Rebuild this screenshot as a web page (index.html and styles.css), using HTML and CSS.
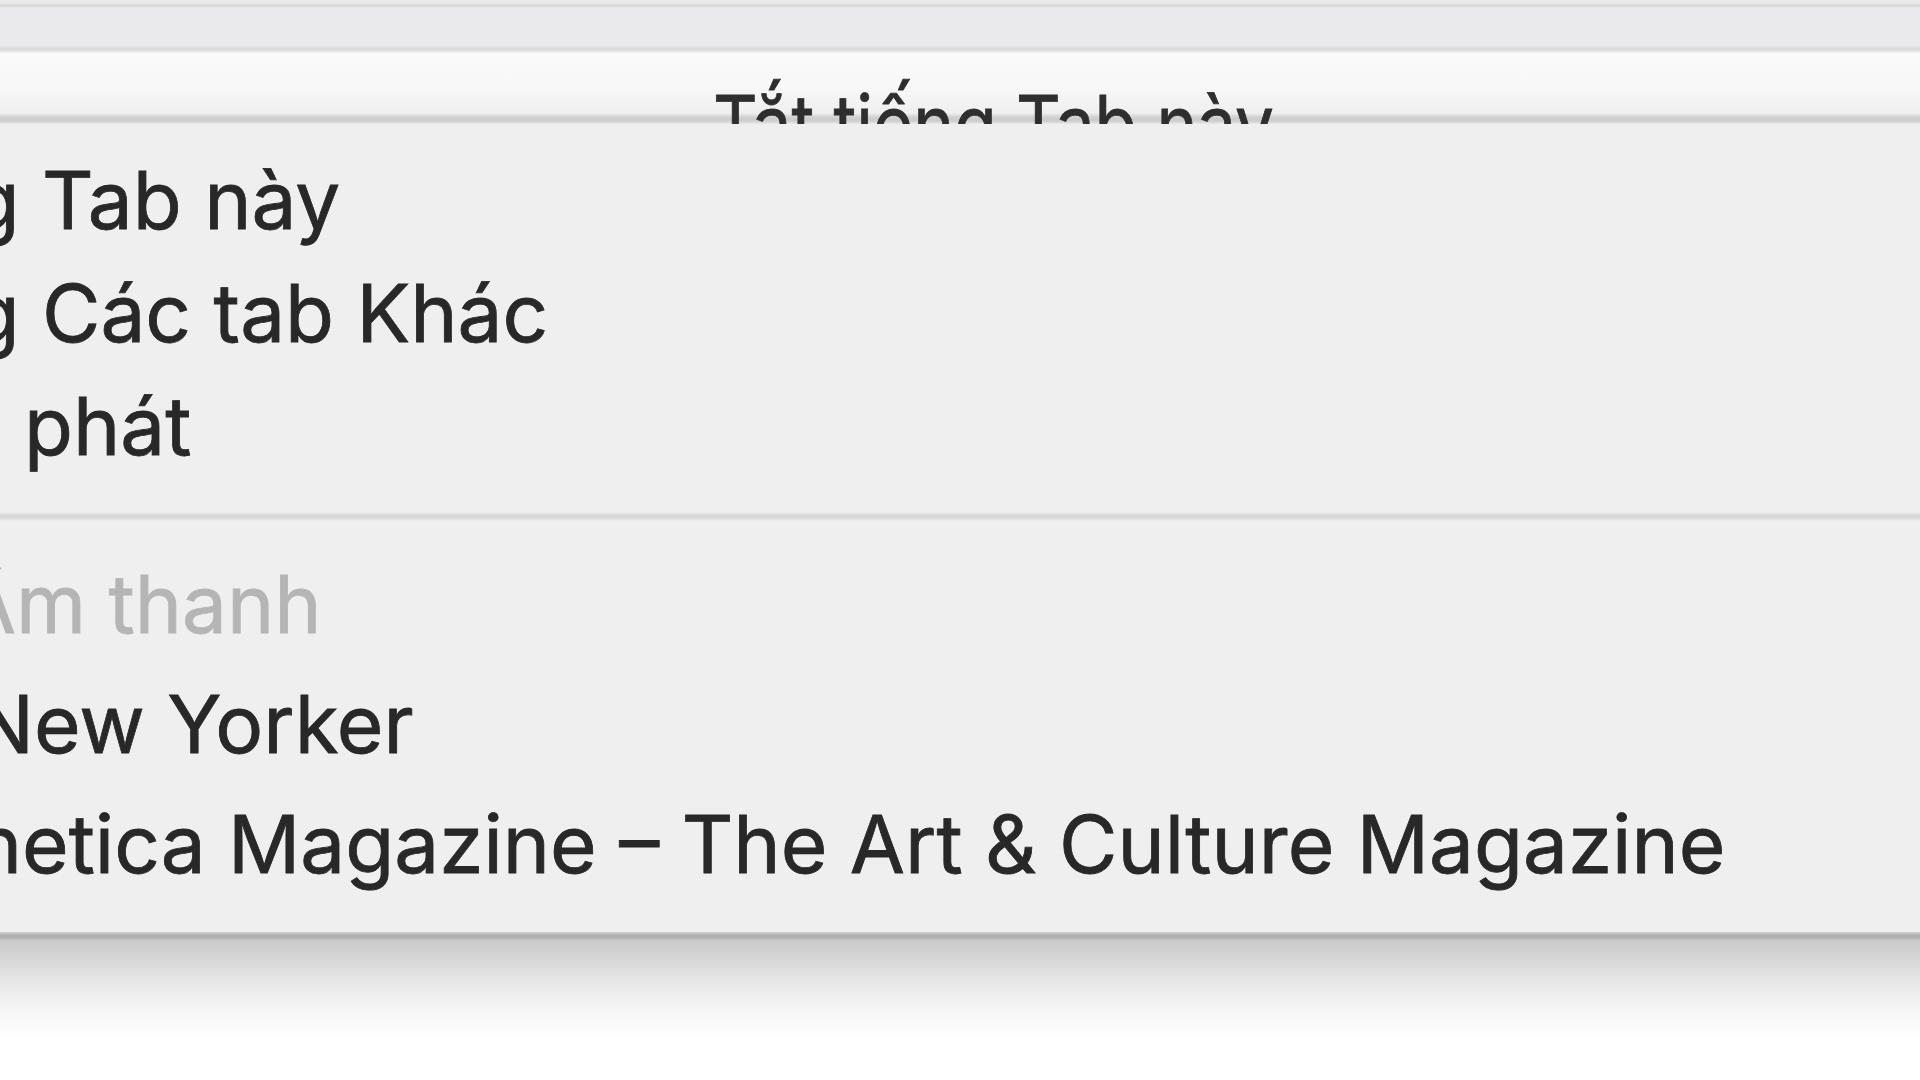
FILE: index.html
```html
<!DOCTYPE html>
<html lang="vi">
<head>
<meta charset="utf-8">
<title>Safari – Âm thanh</title>
<link rel="stylesheet" href="styles.css">
</head>
<body>
<div class="screen">
  <div class="window-top"></div>
  <div class="toolbar"></div>
  <div class="toolbar-edge"></div>
  <div class="tabbar">
    <span class="tab-title">Tắt tiếng Tab này</span>
  </div>

  <div class="menu">
    <div class="group group-actions">
      <div class="item"><span class="cut cut-mute"><span>Tắt tiếng </span></span><span>Tab này</span></div>
      <div class="item"><span class="cut cut-mute"><span>Tắt tiếng </span></span><span>Các tab Khác</span></div>
      <div class="item"><span class="cut cut-stop"><span>Dừng </span></span><span>phát</span></div>
    </div>
    <div class="separator"></div>
    <div class="group group-tabs">
      <div class="item item-header"><span class="cut cut-header"><span>Đang phát Â</span></span><span>m thanh</span></div>
      <div class="item"><span class="cut cut-newyorker"><span>The N</span></span><span>ew Yorker</span></div>
      <div class="item"><span class="cut cut-aesthetica"><span>Aesth</span></span><span>etica Magazine – The Art &amp; Culture Magazine</span></div>
    </div>
  </div>
  <div class="menu-edge"></div>
  <div class="menu-shadow"></div>
</div>
</body>
</html>
```

FILE: styles.css
```css
* {
  box-sizing: border-box;
}

html, body {
  margin: 0;
  padding: 0;
  background: #ffffff;
}

body {
  font-family: Inter, "Noto Sans", "Liberation Sans", sans-serif;
  color: #2b2b2b;
  overflow: hidden;
}

.screen {
  width: 1920px;
  height: 1080px;
  display: flex;
  flex-direction: column;
  overflow: hidden;
  background: #ffffff;
}

/* window chrome above the tab strip */
.window-top {
  height: 8px;
  flex: none;
  background: linear-gradient(#e9e9e9 0, #e9e9e9 3px, #d9d9d9 5px, #dadada 6px, #e9e9e9 8px);
}

.toolbar {
  height: 38px;
  flex: none;
  background: #eae9eb;
}

.toolbar-edge {
  height: 7px;
  flex: none;
  background: linear-gradient(#e6e5e7 0, #dadada 3px, #dcdcdc 4px, #f4f4f4 7px);
}

/* active tab, its title runs under the menu */
.tabbar {
  height: 71px;
  flex: none;
  overflow: hidden;
  padding: 21px 0 0 713px;
  background: linear-gradient(#fbfbfb 0, #f7f7f7 36px, #efefef 60px, #d2d2d2 64px, #cbcbcb 67px, #d6d6d6 69px, #ececec 71px);
}

.tab-title {
  display: block;
  font-size: 80px;
  line-height: 100px;
  white-space: nowrap;
  color: #2e2e2e;
  -webkit-text-stroke: 0.8px #2e2e2e;
  transform: scaleX(0.865);
  transform-origin: 0 0;
}

/* drop-down menu */
.menu {
  flex: none;
  background: #efefef;
  padding: 19px 0 28px 0;
  font-size: 80px;
  overflow: hidden;
}

.group-actions .item {
  height: 113px;
  line-height: 113px;
}

.group-tabs .item {
  height: 120px;
  line-height: 120px;
}

.item {
  display: flex;
  align-items: baseline;
  color: #282828;
  -webkit-text-stroke: 0.8px #282828;
}

.item span {
  white-space: pre;
}

.item-header {
  color: #b5b5b5;
  -webkit-text-stroke: 0.8px #b5b5b5;
}

/* leading part of a label that runs off the left edge */
.cut {
  flex: none;
  display: flex;
  justify-content: flex-end;
  overflow: hidden;
}

.cut > span {
  flex: none;
}

.cut-mute { width: 42px; }
.cut-stop { width: 24px; }
.cut-header { width: 16px; }
.cut-newyorker { width: 34px; }
.cut-aesthetica { width: 22px; }

.separator {
  height: 62px;
  padding-top: 30px;
}

.separator::before {
  content: "";
  display: block;
  height: 9px;
  background: linear-gradient(#efefef, #d8d8d8 35%, #d8d8d8 65%, #efefef);
}

.menu-edge {
  height: 8px;
  flex: none;
  background: linear-gradient(#d4d4d4, #b0b0b0 40%, #b2b2b2 70%, #c6c6c6);
}

.menu-shadow {
  flex: 1;
  background: linear-gradient(#c9c9c9 0, #d6d6d6 18px, #e9e9e9 45px, #f6f6f6 70px, #ffffff 100px);
}
```
